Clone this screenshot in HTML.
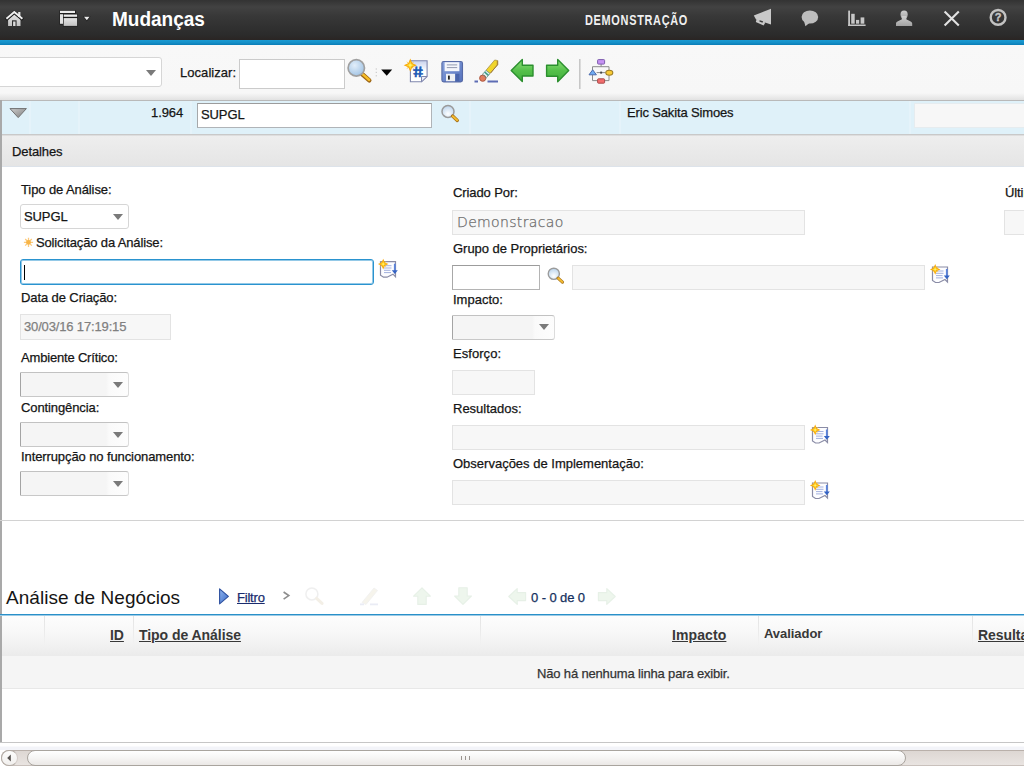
<!DOCTYPE html>
<html lang="pt-BR">
<head>
<meta charset="utf-8">
<title>Mudanças</title>
<style>
html,body{margin:0;padding:0;}
body{width:1024px;height:768px;overflow:hidden;position:relative;background:#fff;
  font-family:"Liberation Sans",Arial,sans-serif;font-size:13px;color:#1c1c1c;}
.abs{position:absolute;}
/* header */
#hdr{left:0;top:0;width:1024px;height:40px;
  background:linear-gradient(#333 0,#424242 7px,#383838 16px,#2b2b2b 35px,#2a2523 40px);}
#blue{left:0;top:40px;width:1024px;height:5px;background:linear-gradient(#1b9bd3,#1590c8 50%,#0b7db6);}
#title{left:112px;top:7px;font-size:20px;font-weight:bold;color:#fff;line-height:24px;white-space:nowrap;transform-origin:0 50%;transform:scaleX(.95);}
#demo{left:585px;top:12px;font-size:14px;font-weight:bold;color:#f0f0f0;line-height:16px;white-space:nowrap;
  transform-origin:0 50%;transform:scaleX(.78);letter-spacing:.9px;}
/* toolbar */
#tb{left:0;top:45px;width:1024px;height:55px;background:linear-gradient(#f8f8f8 0,#f7f7f7 48px,#e2e2e2 55px);}
.lbl{position:absolute;white-space:nowrap;line-height:16px;font-size:13px;color:#151515;letter-spacing:-.1px;-webkit-text-stroke:.25px;}
.inp{position:absolute;box-sizing:border-box;border:1px solid #c4c4c4;background:#fff;}
.ro{position:absolute;box-sizing:border-box;border:1px solid #e3e3e3;background:#f7f7f7;}
.sel{position:absolute;box-sizing:border-box;border:1px solid #d6d6d6;border-radius:3px;background:#fff;}
.sel.dis{background:linear-gradient(90deg,#f5f5f5 0,#f5f5f5 85px,#fafafa 88px,#fdfdfd 100%);border-color:#c2c2c2 #dcdcdc #c8c8c8 #a4a4a4;border-radius:1px 3px 3px 1px;}
.arr{position:absolute;width:0;height:0;border-left:5.5px solid transparent;border-right:5.5px solid transparent;border-top:6px solid #7a7a7a;}
/* row */
#row{left:0;top:100px;width:1024px;height:36px;box-sizing:border-box;background:#dff1f9;border-top:1px solid #b9b9b9;border-bottom:1px solid #dedede;box-shadow:inset 0 -1px 0 #c9c9c9;}
#det{left:0;top:136px;width:1024px;height:31px;box-sizing:border-box;background:linear-gradient(#eeeeee,#e5e5e5);border-bottom:1px solid #dde3ea;}
#lb{left:0;top:100px;width:2px;height:642px;background:#a9a9a9;}
.hl{position:absolute;left:0;width:1024px;height:1px;background:#d2d2d2;}
/* table */
#h2{left:6px;top:586px;font-size:19px;line-height:24px;color:#151515;white-space:nowrap;letter-spacing:.05px;}
#bl2{left:0;top:614px;width:1024px;height:2px;background:linear-gradient(#2a90c9 0,#2a90c9 1px,#9ccbe6 1px,#9ccbe6 2px);}
#th{left:2px;top:616px;width:1022px;height:40px;background:linear-gradient(#fdfdfd 0,#f7f7f7 45%,#ebebeb 100%);}
.thc{position:absolute;font-weight:bold;font-size:14px;line-height:16px;color:#383838;white-space:nowrap;letter-spacing:-.05px;}
.thc.u{text-decoration:underline;}
.vs{position:absolute;top:616px;width:1px;height:30px;background:linear-gradient(#e4e4e4,#ececec 60%,rgba(236,236,236,0));}
#tr{left:2px;top:656px;width:1022px;height:33px;box-sizing:border-box;background:#f5f5f5;border-bottom:1px solid #e8e8e8;}
/* scrollbar */
#sbw{left:0;top:742px;width:1024px;height:26px;background:linear-gradient(#c6c6c6 0,#c6c6c6 1px,#fff 1px,#fff 4px,#f3f4f9 5px,#f3f4f9 8px,#fff 8px);}
#sbt{left:1px;top:750px;width:1040px;height:16px;background:linear-gradient(#ddd7d3,#e9e4e1);border:1px solid #b9b0aa;border-bottom-color:#c9c1bc;border-radius:8px 0 0 8px;box-sizing:border-box;}
#sbb{left:1px;top:750px;width:17px;height:16px;box-sizing:border-box;border:1px solid #b4aca6;border-right-color:#d4ccc8;border-radius:8px;background:linear-gradient(#fdfdfc,#f1efed);}
#sbth{left:27px;top:750px;width:879px;height:16px;box-sizing:border-box;border:1px solid #a9a49e;border-radius:8px;background:linear-gradient(#fff,#f6f5f4 50%,#ebe8e6);}
.grip{position:absolute;top:756px;width:1px;height:4px;background:#9a948f;}
</style>
</head>
<body>
<div id="hdr" class="abs"></div>
<div id="blue" class="abs"></div>
<div id="title" class="abs">Mudanças</div>
<div id="demo" class="abs">DEMONSTRAÇÃO</div>

<div id="tb" class="abs"></div>
<!--ICONS-->
<div class="sel" style="left:-10px;top:57px;width:172px;height:30px;"></div>
<div class="arr" style="left:146px;top:70px;"></div>
<div class="lbl" style="left:180px;top:65px;letter-spacing:.05px;">Localizar:</div>
<div class="inp" style="left:239px;top:59px;width:106px;height:30px;border-color:#cbcbcb;"></div>

<div id="row" class="abs"></div>
<div class="abs" style="left:29px;top:101px;width:2px;height:33px;background:rgba(255,255,255,.2);"></div><div class="abs" style="left:78px;top:101px;width:2px;height:33px;background:rgba(255,255,255,.2);"></div><div class="abs" style="left:190px;top:101px;width:2px;height:33px;background:rgba(255,255,255,.2);"></div><div class="abs" style="left:469px;top:101px;width:2px;height:33px;background:rgba(255,255,255,.2);"></div><div class="abs" style="left:619px;top:101px;width:2px;height:33px;background:rgba(255,255,255,.2);"></div><div class="abs" style="left:909px;top:101px;width:2px;height:33px;background:rgba(255,255,255,.2);"></div>
<div class="lbl" style="left:151px;top:105px;">1.964</div>
<div class="inp" style="left:197px;top:103px;width:235px;height:25px;border-color:#9c9c9c #b0b4b8 #b0b4b8 #a6a8aa;"></div>
<div class="lbl" style="left:201px;top:107px;">SUPGL</div>
<div class="lbl" style="left:627px;top:105px;letter-spacing:-.15px;">Eric Sakita Simoes</div>
<div class="ro" style="left:914px;top:103px;width:120px;height:25px;background:#f7f7f7;border-color:#e6ecef;"></div>

<div id="det" class="abs"></div>
<div class="lbl" style="left:12px;top:144px;">Detalhes</div>
<div id="lb" class="abs"></div>

<!-- left column -->
<div class="lbl" style="left:21px;top:182px;">Tipo de Análise:</div>
<div class="sel" style="left:20px;top:204px;width:109px;height:25px;"></div>
<div class="lbl" style="left:24px;top:209px;">SUPGL</div>
<div class="arr" style="left:113px;top:214px;"></div>
<div class="lbl" style="left:36px;top:235px;letter-spacing:-.14px;">Solicitação da Análise:</div>
<div class="inp" style="left:20px;top:259px;width:354px;height:26px;border:1px solid #2a93cf;border-radius:3px;box-shadow:inset 0 0 0 1px rgba(42,147,207,.5);"></div>
<div class="abs" style="left:24px;top:265px;width:1px;height:15px;background:#000;"></div>
<div class="lbl" style="left:21px;top:290px;">Data de Criação:</div>
<div class="ro" style="left:20px;top:314px;width:151px;height:26px;"></div>
<div class="lbl" style="left:24px;top:319px;color:#808080;letter-spacing:-.15px;">30/03/16 17:19:15</div>
<div class="lbl" style="left:21px;top:350px;letter-spacing:-.18px;">Ambiente Crítico:</div>
<div class="sel dis" style="left:20px;top:372px;width:109px;height:25px;"></div>
<div class="arr" style="left:113px;top:382px;"></div>
<div class="lbl" style="left:21px;top:400px;">Contingência:</div>
<div class="sel dis" style="left:20px;top:422px;width:109px;height:25px;"></div>
<div class="arr" style="left:113px;top:432px;"></div>
<div class="lbl" style="left:21px;top:449px;">Interrupção no funcionamento:</div>
<div class="sel dis" style="left:20px;top:471px;width:109px;height:25px;"></div>
<div class="arr" style="left:113px;top:481px;"></div>

<!-- right column -->
<div class="lbl" style="left:453px;top:185px;">Criado Por:</div>
<div class="lbl" style="left:1005px;top:185px;">Última</div>
<div class="ro" style="left:452px;top:210px;width:353px;height:25px;"></div>
<div class="lbl" style="left:457px;top:214px;color:#6c6c6c;font-family:'DejaVu Sans',sans-serif;font-weight:200;font-size:14px;letter-spacing:.35px;">Demonstracao</div>
<div class="ro" style="left:1004px;top:210px;width:40px;height:25px;"></div>
<div class="lbl" style="left:453px;top:241px;letter-spacing:-.03px;">Grupo de Proprietários:</div>
<div class="inp" style="left:452px;top:265px;width:88px;height:25px;border-color:#9c9c9c #b4b4b4 #b4b4b4 #a8a8a8;"></div>
<div class="ro" style="left:572px;top:265px;width:353px;height:25px;"></div>
<div class="lbl" style="left:453px;top:292px;letter-spacing:0;">Impacto:</div>
<div class="sel dis" style="left:452px;top:315px;width:103px;height:25px;background:linear-gradient(90deg,#f5f5f5 0,#f5f5f5 79px,#fafafa 82px,#fdfdfd 100%);"></div>
<div class="arr" style="left:539px;top:324px;"></div>
<div class="lbl" style="left:453px;top:346px;letter-spacing:.05px;">Esforço:</div>
<div class="ro" style="left:452px;top:370px;width:83px;height:25px;"></div>
<div class="lbl" style="left:453px;top:401px;letter-spacing:0;">Resultados:</div>
<div class="ro" style="left:452px;top:425px;width:353px;height:25px;"></div>
<div class="lbl" style="left:453px;top:456px;letter-spacing:0;">Observações de Implementação:</div>
<div class="ro" style="left:452px;top:480px;width:353px;height:25px;"></div>

<div class="hl" style="top:520px;"></div>

<!-- table section -->
<div id="h2" class="abs">Análise de Negócios</div>
<div class="lbl" style="left:237px;top:590px;color:#1a2c6e;text-decoration:underline;letter-spacing:-.2px;">Filtro</div>
<div class="lbl" style="left:531px;top:590px;color:#14305e;">0 - 0 de 0</div>
<div id="bl2" class="abs"></div>
<div id="th" class="abs"></div>
<div class="vs" style="left:44px;"></div>
<div class="vs" style="left:133px;"></div>
<div class="vs" style="left:480px;"></div>
<div class="vs" style="left:758px;"></div>
<div class="vs" style="left:972px;"></div>
<div class="thc u" style="left:110px;top:627px;">ID</div>
<div class="thc u" style="left:139px;top:627px;">Tipo de Análise</div>
<div class="thc u" style="left:672px;top:627px;letter-spacing:.1px;">Impacto</div>
<div class="thc" style="left:764px;top:626px;font-size:13px;">Avaliador</div>
<div class="thc u" style="left:978px;top:627px;">Resultados</div>
<div id="tr" class="abs"></div>
<div class="lbl" style="left:537px;top:666px;color:#333;letter-spacing:-.16px;">Não há nenhuma linha para exibir.</div>

<div id="sbw" class="abs"></div>
<div id="sbt" class="abs"></div>
<div id="sbb" class="abs"></div>
<div id="sbth" class="abs"></div>
<div class="grip" style="left:461px;"></div><div class="grip" style="left:465px;"></div><div class="grip" style="left:469px;"></div>

<svg class="abs" style="left:0;top:0;" width="1024" height="768" viewBox="0 0 1024 768">
<defs>
<linearGradient id="gw" x1="0" y1="0" x2="0" y2="1"><stop offset="0" stop-color="#e4e4e4"/><stop offset="1" stop-color="#c2c2c2"/></linearGradient>
<linearGradient id="gg" x1="0" y1="0" x2="0" y2="1"><stop offset="0" stop-color="#cfcfcf"/><stop offset="1" stop-color="#a2a2a2"/></linearGradient>
<linearGradient id="grn" x1="0" y1="0" x2="0" y2="1"><stop offset="0" stop-color="#8fe07a"/><stop offset=".5" stop-color="#55c04a"/><stop offset="1" stop-color="#3fae3c"/></linearGradient>
<radialGradient id="lens" cx=".4" cy=".35" r=".7"><stop offset="0" stop-color="#e2eef9"/><stop offset="1" stop-color="#9fc2e4"/></radialGradient>
<radialGradient id="lens2" cx=".5" cy=".7" r=".7"><stop offset="0" stop-color="#ffffff"/><stop offset="1" stop-color="#b9d3ec"/></radialGradient>
<linearGradient id="sav" x1="0" y1="0" x2="1" y2="1"><stop offset="0" stop-color="#86a0dc"/><stop offset="1" stop-color="#5672bc"/></linearGradient>
<linearGradient id="pg" x1="0" y1="0" x2="0" y2="1"><stop offset="0" stop-color="#c9d3ee"/><stop offset=".5" stop-color="#fff"/></linearGradient>
<linearGradient id="trg" x1="0" y1="0" x2="1" y2="1"><stop offset="0" stop-color="#cfcfcf"/><stop offset=".6" stop-color="#9d9d9d"/><stop offset="1" stop-color="#8a8a8a"/></linearGradient>
<g id="star"><path d="M-4 -4 L0 -1.3 L4 -4 L1.3 0 L4 4 L0 1.3 L-4 4 L-1.3 0 Z" fill="#fbc83a"/><path d="M0 -6.6 L2 -2 L6.6 0 L2 2 L0 6.6 L-2 2 L-6.6 0 L-2 -2 Z" fill="#f9a90a"/><path d="M0 -4 L1.2 -1.2 L4 0 L1.2 1.2 L0 4 L-1.2 1.2 L-4 0 L-1.2 -1.2 Z" fill="#fdd835"/><circle r="1.2" fill="#fff36b"/></g>
<g id="mag"><circle cx="0" cy="0" r="6" fill="url(#lens2)" stroke="#9b9b9b" stroke-width="1.5"/><path d="M4.6 4.7 L9.3 9" stroke="#a5711c" stroke-width="3.4" stroke-linecap="round"/><path d="M4.8 4.8 L9.2 8.8" stroke="#f3bb30" stroke-width="2" stroke-linecap="round"/></g>
<g id="ld"><path d="M0.5 0.5 H15.5 V15.5 L13 13 L7 16 L3.5 16 L0.5 14 Z" fill="#fdfdff" stroke="#8a8ca6" stroke-width="1.2"/><path d="M4 4.5 H11.5 M4 6.8 H11.5 M4 9.1 H10.5 M4 11.4 H11" stroke="#a3b1de" stroke-width="1"/><path d="M14.8 2.5 V10" stroke="#5b84dc" stroke-width="1.8"/><path d="M11.8 9 H17.8 L14.8 12.8 Z" fill="#3463c4"/><use href="#star" transform="translate(3.2,2.9) scale(.8)"/></g>
</defs>
<!-- home -->
<g>
<path d="M8.1 19.4 L14.3 13.6 L20.5 19.4 V26 H8.1 Z" fill="url(#gw)"/>
<path d="M5.8 19.7 L14.3 12.4 L23 19.7" fill="none" stroke="#1f1f1f" stroke-width="3.4"/>
<rect x="18.2" y="12" width="2.2" height="5" fill="#e4e4e4"/>
<path d="M6.4 18.8 L14.3 12 L22.4 18.8" fill="none" stroke="#f0f0f0" stroke-width="1.9"/>
<rect x="12" y="20.3" width="4.6" height="5.7" fill="#2e2e2e"/>
<rect x="13.1" y="21.5" width="2.4" height="4.5" fill="#dcdcdc"/>
</g>
<!-- windows -->
<g>
<rect x="59.4" y="10.2" width="16.4" height="14.4" fill="#1e1e1e"/>
<rect x="60" y="10.8" width="15" height="2.2" fill="#ececec"/>
<rect x="60" y="14.2" width="3" height="9.6" fill="#e2e2e2"/>
<rect x="63" y="13.8" width="14.8" height="12.8" fill="#1e1e1e"/>
<rect x="63.7" y="14.5" width="13.4" height="2.3" fill="#ececec"/>
<rect x="63.7" y="18.1" width="13.4" height="7.8" fill="url(#gw)"/>
<path d="M83 16.2 H90.6 L86.8 21.4 Z" fill="#1e1e1e"/>
<path d="M84 16.8 H89.6 L86.8 20.2 Z" fill="#ececec"/>
</g>
<!-- megaphone -->
<g fill="#c9c9c9">
<path d="M753.8 15.6 L771 8.8 V24.4 L756 19.6 Z"/>
<path d="M756.6 19.3 L765.4 22.4 L763.6 25.6 L755.8 22 Z"/>
<rect x="759.5" y="20.6" width="3.4" height="1.5" fill="#3a3a3a" transform="rotate(20 761 21.3)"/>
</g>
<!-- bubble -->
<g fill="#bdbdbd"><ellipse cx="809.9" cy="17" rx="8.3" ry="6.6"/><path d="M804 21 L805.4 26.2 L810 22.5 Z"/></g>
<!-- chart -->
<g fill="#c6c6c6">
<rect x="848.2" y="10.6" width="1.8" height="15.4"/><rect x="848.2" y="24.5" width="17.4" height="1.5"/>
<rect x="851.2" y="13.8" width="3.5" height="9.9"/><rect x="856" y="19.9" width="3.2" height="3.8"/><rect x="860.6" y="17.4" width="3.7" height="6.3"/>
</g>
<!-- user -->
<g fill="url(#gg)">
<ellipse cx="904.1" cy="14.6" rx="3.6" ry="4.2"/>
<path d="M901.8 16 H906.4 V19.2 C907.5 20.4 912.2 21 912.2 23.4 V26 H896 V23.4 C896 21 900.7 20.4 901.8 19.2 Z"/>
</g>
<!-- close -->
<path d="M944.6 11.4 L958.8 25.4 M958.8 11.4 L944.6 25.4" stroke="#e2e2e2" stroke-width="2.1"/>
<!-- help -->
<circle cx="998.1" cy="17.4" r="7.4" fill="none" stroke="#c2c2c2" stroke-width="2.4"/>
<text x="998.1" y="21.4" text-anchor="middle" font-family="Liberation Sans, sans-serif" font-weight="bold" font-size="11" fill="#c6c6c6" stroke="#c6c6c6" stroke-width=".35">?</text>

<!-- toolbar magnifier -->
<g>
<path d="M362 74 L369.3 80.4" stroke="#9c6416" stroke-width="4.4" stroke-linecap="round"/>
<path d="M362.6 74.2 L369.2 80" stroke="#f6be28" stroke-width="2.4" stroke-linecap="round"/>
<circle cx="356.3" cy="67.9" r="8.2" fill="url(#lens)" stroke="#a0a0a0" stroke-width="1.7"/>
</g>
<g fill="#c9c9c9"><rect x="375.7" y="68.4" width="1.2" height="1.2"/><rect x="375.7" y="71.8" width="1.2" height="1.2"/><rect x="375.7" y="75.2" width="1.2" height="1.2"/></g>
<path d="M381.2 69.6 H392.2 L386.7 75.8 Z" fill="#050505"/>
<!-- new doc -->
<g>
<path d="M410.4 60.8 H427.1 V76.5 L421.5 81.8 H410.4 Z" fill="url(#pg)" stroke="#7f86ad" stroke-width="1.1"/>
<path d="M427.1 76.5 H421.5 V81.8 Z" fill="#e9ecf7" stroke="#7f86ad" stroke-width="1"/>
<text x="0" y="0" text-anchor="middle" font-family="Liberation Sans, sans-serif" font-weight="bold" font-size="15" fill="#1a58b4" stroke="#1a58b4" stroke-width=".5" transform="translate(418.9 77.3) scale(1.2 1) skewX(9)">#</text>
<use href="#star" transform="translate(410.3,65.2)"/>
</g>
<!-- save -->
<g>
<rect x="441.9" y="61.5" width="20.6" height="20.4" rx="1.8" fill="url(#sav)" stroke="#566aa6" stroke-width="1.1"/>
<rect x="444.6" y="62.2" width="14.8" height="9" fill="#f4f6fb"/>
<path d="M446.8 64.9 H457.2 M446.8 67.6 H457.2" stroke="#9299b0" stroke-width="1"/>
<rect x="446" y="73.8" width="9" height="7.4" fill="#eef0f4"/>
<rect x="448" y="75.6" width="1.8" height="4" fill="#222"/>
<rect x="455.6" y="73.8" width="3.8" height="7.4" fill="#4a64aa"/>
</g>
<!-- eraser -->
<g>
<path d="M474.5 81.6 H478 M487.5 81.6 H498" stroke="#5d6cb4" stroke-width="2"/>
<path d="M486 70.3 L494.7 60 L497.8 60.6 V64.6 L490 73.6 Z" fill="#f1d52a" stroke="#a8924a" stroke-width=".8" stroke-linejoin="round"/>
<path d="M497.3 61 V65 L490.6 73" fill="none" stroke="#a07838" stroke-width="1"/>
<path d="M482.5 74.4 L486 70.3 L490 73.6 L486.4 77.8 Z" fill="#e6f2ef" stroke="#6e8e88" stroke-width=".8"/>
<path d="M484.6 72 L488.4 75.4" stroke="#3b9c8a" stroke-width="1.6"/>
<circle cx="482.7" cy="78.2" r="3.1" fill="#e27c5e" stroke="#a8523a" stroke-width=".9"/>
<path d="M482.5 74.4 L486.4 77.8" stroke="#6e8e88" stroke-width=".8"/>
</g>
<!-- arrows -->
<path d="M511.2 70.5 L522.3 59.6 V65.2 H533 V76 H522.3 V81.6 Z" fill="url(#grn)" stroke="#2b8f2e" stroke-width="1.4" stroke-linejoin="round"/>
<path d="M568.7 70.6 L557.7 59.5 V65.2 H546.6 V76.2 H557.7 V81.8 Z" fill="url(#grn)" stroke="#2b8f2e" stroke-width="1.4" stroke-linejoin="round"/>
<rect x="579.3" y="59" width="1.1" height="30" fill="#b2b2b2"/>
<!-- workflow -->
<g>
<path d="M601.1 64 V66.7 M592.5 70 V66.7 H609 V70 M592.5 75 V80.6 H597.4 M609 75.4 V80.6 H604.8 M596.6 72.6 H605.5" fill="none" stroke="#8c8c8c" stroke-width="1"/>
<rect x="600.2" y="71.6" width="1.9" height="2" fill="#444"/>
<rect x="597.6" y="59.6" width="7" height="4.5" rx=".8" fill="#c692f3" stroke="#7d5cad" stroke-width="1"/>
<rect x="597.6" y="78.8" width="7" height="4.4" rx=".8" fill="#f26d6d" stroke="#a94c4c" stroke-width="1"/>
<path d="M592.7 69.8 L596.4 74.8 H589 Z" fill="#6facf3" stroke="#4a69aa" stroke-width="1" stroke-linejoin="round"/>
<ellipse cx="609.3" cy="72.7" rx="3.5" ry="2.5" fill="#f9cb35" stroke="#9b7b22" stroke-width="1.1"/>
</g>


<!-- table toolbar -->
<defs><linearGradient id="btri" x1="0" y1="0" x2="1" y2="1"><stop offset="0" stop-color="#8fb4ee"/><stop offset="1" stop-color="#3b6bc8"/></linearGradient></defs>
<path d="M219.6 588.8 L228.4 596.3 L219.6 603.8 Z" fill="url(#btri)" stroke="#2c4f9e" stroke-width="1.1" stroke-linejoin="round"/>
<path d="M283.6 592 L288.8 595.6 L283.6 599.2" fill="none" stroke="#8d8d8d" stroke-width="1.6"/>
<g opacity=".13"><circle cx="311.9" cy="593.9" r="6" fill="#fff" stroke="#8a8a8a" stroke-width="1.5"/><path d="M316.6 598.4 L322 603.4" stroke="#a88a4a" stroke-width="3" stroke-linecap="round"/></g>
<g opacity=".12"><path d="M362 602.5 L374 588 L377.5 590.5 L366 604.5 Z" fill="#b9a86a" stroke="#8a8a8a" stroke-width=".8"/><path d="M360 604.4 H364 M370 604.4 H378" stroke="#5d6cb4" stroke-width="1.6"/></g>
<g opacity=".13" fill="#7fc27a" stroke="#4c944c" stroke-width="1.1" stroke-linejoin="round">
<path d="M422 587.8 L430.4 596.2 H426.2 V604.4 H417.8 V596.2 H413.6 Z"/>
<path d="M463 604.4 L471.4 596 H467.2 V587.8 H458.8 V596 H454.6 Z"/>
<path d="M508.8 596.5 L517.2 588.6 V592.6 H525.6 V600.6 H517.2 V604.4 Z"/>
<path d="M615.2 596.5 L606.8 588.6 V592.6 H598.4 V600.6 H606.8 V604.4 Z"/>
</g>
<path d="M7.2 758 L10.8 754.4 V761.6 Z" fill="#55514e"/>
<!-- required star -->
<g transform="translate(28.5,242.3)" stroke="#fbca7e" stroke-width="1.3"><path d="M-4.6 0 H4.6 M0 -4.6 V4.6 M-3.3 -3.3 L3.3 3.3 M-3.3 3.3 L3.3 -3.3"/><circle r="2.4" fill="#f8b547" stroke="none"/></g>
<!-- row triangle -->
<path d="M10 108.6 H26.4 L18.2 117.6 Z" fill="url(#trg)" stroke="#707070" stroke-width="1" stroke-linejoin="round"/>
<!-- small magnifiers -->
<use href="#mag" transform="translate(448,111.4)"/>
<use href="#mag" transform="translate(553.8,273.8) scale(.93)"/>
<!-- long-desc icons -->
<use href="#ld" transform="translate(380,261.2)"/>
<use href="#ld" transform="translate(932,266.5)"/>
<use href="#ld" transform="translate(812,427)"/>
<use href="#ld" transform="translate(812,482.5)"/>
</svg>
</body>
</html>
